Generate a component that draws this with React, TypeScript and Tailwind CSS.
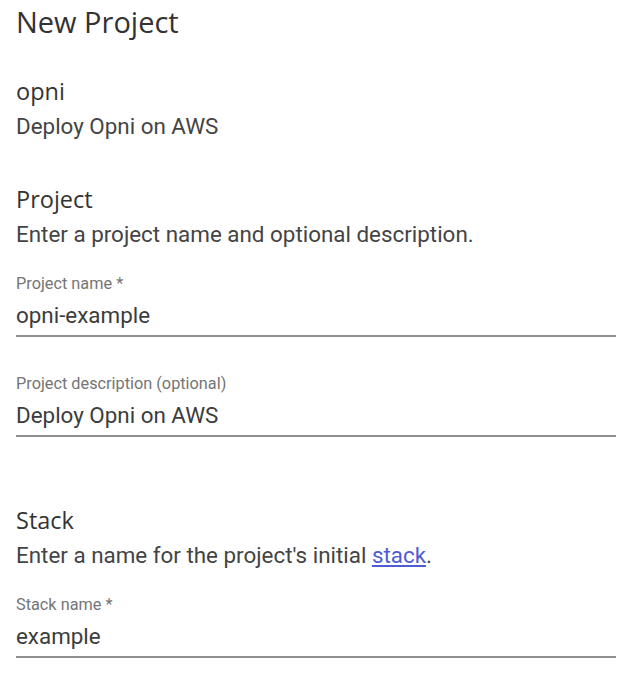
const headingFont = "font-['Open_Sans','Noto_Sans',sans-serif]";

type FieldProps = {
  label: string;
  value: string;
};

function Field({ label, value }: FieldProps) {
  return (
    <div className="w-[600px]">
      <div className="text-[16.3px] leading-[24px] text-[#757575]">{label}</div>
      <div className="mt-[4px] text-[22.4px] leading-[30px] text-[#3c3c3c] pb-[5px] border-b-2 border-[#8f8f8f]">
        {value}
      </div>
    </div>
  );
}

export default function App() {
  return (
    <div className="bg-white min-h-[685px] px-4 font-['Roboto',sans-serif]">
      <h1 className={`${headingFont} text-[29px] leading-[44px] text-[#333333]`}>
        New Project
      </h1>

      <div className="mt-[30px]">
        <h2 className={`${headingFont} text-[23.5px] leading-[35px] text-[#333333]`}>opni</h2>
        <p className="text-[22.4px] leading-[35px] text-[#444444]">Deploy Opni on AWS</p>
      </div>

      <div className="mt-[38px]">
        <h2 className={`${headingFont} text-[23.5px] leading-[35px] text-[#333333]`}>Project</h2>
        <p className="text-[22.4px] leading-[35px] text-[#444444]">
          Enter a project name and optional description.
        </p>
      </div>

      <div className="mt-[20px] flex flex-col gap-[35px]">
        <Field label="Project name *" value="opni-example" />
        <Field label="Project description (optional)" value="Deploy Opni on AWS" />
      </div>

      <div className="mt-[66px]">
        <h2 className={`${headingFont} text-[23.5px] leading-[35px] text-[#333333]`}>Stack</h2>
        <p className="text-[22.4px] leading-[35px] text-[#444444]">
          Enter a name for the project's initial{" "}
          <a href="#" className="text-[#4f5bd5] underline">
            stack
          </a>
          .
        </p>
      </div>

      <div className="mt-[20px]">
        <Field label="Stack name *" value="example" />
      </div>
    </div>
  );
}
